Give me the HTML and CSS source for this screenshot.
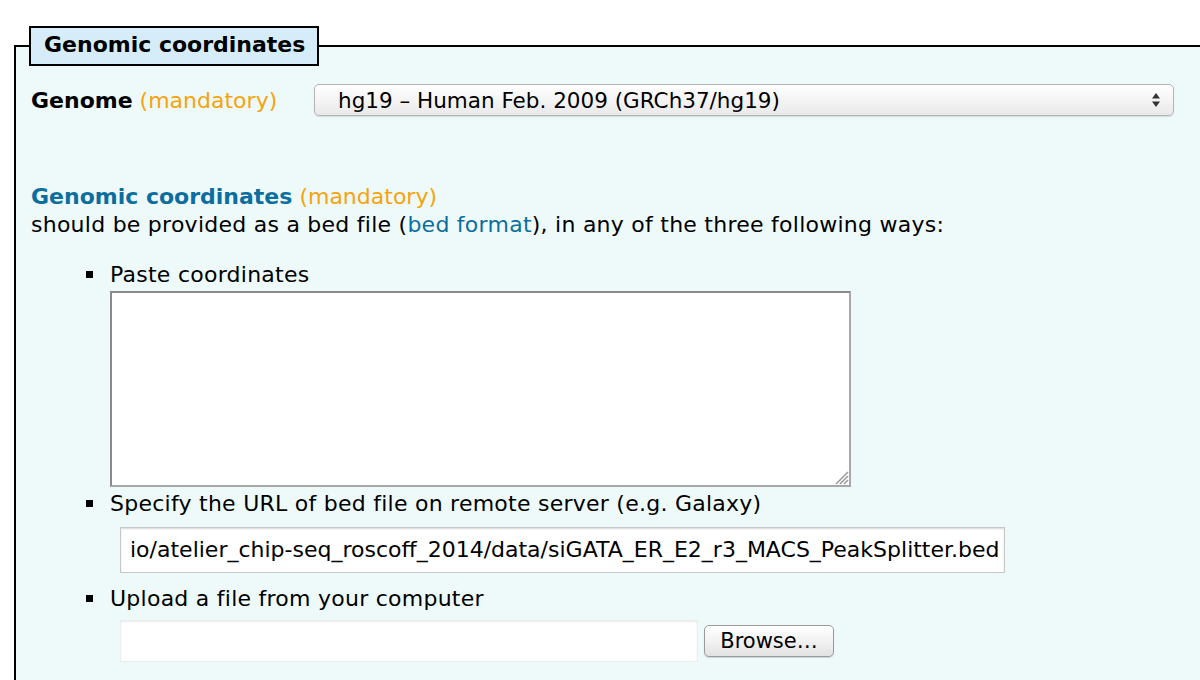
FILE: index.html
```html
<!DOCTYPE html>
<html>
<head>
<meta charset="utf-8">
<link rel="stylesheet" href="styles.css">
</head>
<body>
<fieldset class="box">
  <legend class="legend">Genomic coordinates</legend>
  <div class="genome-row">
    <span class="label"><b>Genome</b> <span class="mand">(mandatory)</span></span>
    <div class="select">
      <span class="select-text">hg19 – Human Feb. 2009 (GRCh37/hg19)</span>
      <svg class="arrows" width="10" height="18" viewBox="0 0 10 18"><path d="M5 2 L9 7.5 H1 Z M5 16 L9 10.5 H1 Z" fill="#333"/></svg>
    </div>
  </div>
  <div class="coords">
    <div class="heading"><b class="blue">Genomic coordinates</b> <span class="mand">(mandatory)</span></div>
    <div class="desc">should be provided as a bed file (<a class="link">bed format</a>), in any of the three following ways:</div>
  </div>
  <ul class="ways">
    <li>
      <div class="li-text">Paste coordinates</div>
      <div class="textarea">
        <svg class="grip" width="16" height="16" viewBox="0 0 16 16"><path d="M15 3 L3 15 M15 7 L7 15 M15 11 L11 15" stroke="#999" stroke-width="1.5"/></svg>
      </div>
    </li>
    <li>
      <div class="li-text">Specify the URL of bed file on remote server (e.g. Galaxy)</div>
      <div class="url">io/atelier_chip-seq_roscoff_2014/data/siGATA_ER_E2_r3_MACS_PeakSplitter.bed</div>
    </li>
    <li>
      <div class="li-text">Upload a file from your computer</div>
      <div class="file-row">
        <div class="file-field"></div>
        <div class="browse">Browse…</div>
      </div>
    </li>
  </ul>
</fieldset>
</body>
</html>
```
FILE: styles.css
```css
html, body {
  margin: 0;
  padding: 0;
  background: #ffffff;
}
body {
  font-family: "DejaVu Sans", Verdana, sans-serif;
  font-size: 22px;
  letter-spacing: 0.25px;
  color: #000;
  overflow: hidden;
  height: 680px;
}
.box {
  margin: 26px 0 0 14px;
  border: 2px solid #000;
  border-right: none;
  background: #eefafa;
  padding: 0 0 40px 15px;
  min-width: 0;
  height: 700px;
  box-sizing: border-box;
}
.legend {
  background: #d6edf9;
  border: 2px solid #000;
  font-weight: bold;
  font-size: 22px;
  letter-spacing: 0;
  padding: 5px 12px 7px 13px;
  margin-left: -2px;
  line-height: 24px;
}
.genome-row {
  display: flex;
  align-items: center;
  margin-top: 18px;
}
.label {
  width: 283px;
  flex: none;
  letter-spacing: 0;
}
.mand {
  color: #f7a30c;
}
.select {
  width: 823px;
  height: 30px;
  border: 1px solid #b4b4b4;
  border-radius: 5px;
  background: linear-gradient(#ffffff, #f4f4f4 50%, #e9e9e9);
  box-shadow: 0 1px 1px rgba(0,0,0,0.12);
  display: flex;
  align-items: center;
  justify-content: space-between;
  padding: 0 12px 0 23px;
  font-size: 21.5px;
  letter-spacing: 0;
}
.arrows {
  display: block;
}
.coords {
  margin-top: 67px;
  line-height: 28px;
}
.heading {
  letter-spacing: 0;
}
.blue {
  color: #0c6e9f;
}
.link {
  color: #0c6e9f;
}
.ways {
  list-style: none;
  margin: 22px 0 0 0;
  padding-left: 79px;
  line-height: 28px;
}
.ways li {
  position: relative;
}
.ways li::before {
  content: "";
  position: absolute;
  left: -24px;
  top: 10px;
  width: 7px;
  height: 7px;
  background: #000;
}
.textarea {
  position: relative;
  width: 737px;
  height: 192px;
  border: 2px solid #8a8a8a;
  border-right-color: #a8a8a8;
  border-bottom-color: #a8a8a8;
  background: #fff;
  margin: 2px 0 3px 0;
}
.grip {
  position: absolute;
  right: 0;
  bottom: 0;
}
.url {
  margin: 9px 0 12px 10px;
  width: 874px;
  height: 44px;
  border: 1px solid #c8c8c8;
  box-shadow: inset 0 1px 2px rgba(0,0,0,0.15);
  background: #fff;
  line-height: 44px;
  padding-left: 9px;
  font-size: 22px;
  letter-spacing: 0;
  white-space: nowrap;
  overflow: hidden;
}
.file-row {
  display: flex;
  align-items: center;
  margin: 7px 0 0 10px;
}
.file-field {
  width: 576px;
  height: 40px;
  border: 1px solid #ececec;
  box-shadow: inset 0 1px 2px rgba(0,0,0,0.08);
  background: #fff;
}
.browse {
  margin-left: 6px;
  width: 128px;
  height: 30px;
  border: 1px solid #9a9a9a;
  border-radius: 5px;
  background: linear-gradient(#ffffff, #f2f2f2 50%, #e2e2e2);
  box-shadow: 0 1px 1px rgba(0,0,0,0.15);
  text-align: center;
  line-height: 30px;
  font-size: 21px;
  letter-spacing: 0;
}
```
